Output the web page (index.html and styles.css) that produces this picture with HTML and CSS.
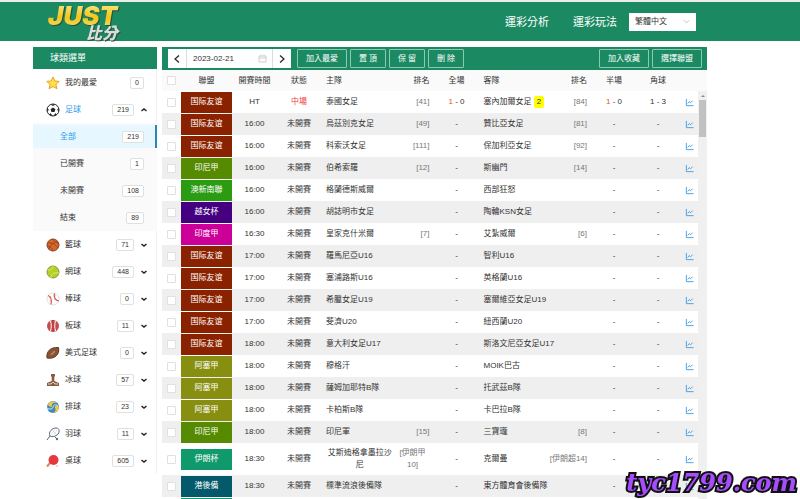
FILE: index.html
```html
<!DOCTYPE html>
<html lang="zh-Hant">
<head>
    <meta charset="UTF-8">
    <meta name="viewport" content="width=device-width, initial-scale=1.0">
    <title>JUST 比分</title>
    <link rel="stylesheet" href="styles.css">
</head>
<body>

    <!-- Shared icons -->
    <svg class="sprite" aria-hidden="true">
        <symbol id="chart" viewBox="0 0 10 10"><path d="M1.5 1v7.5H9.5M3 6l1.700-2 1.500 1.300L8.500 3" fill="none" stroke="#3a9be8"/></symbol>
        <symbol id="down" viewBox="0 0 8 8"><path d="M1.500 3L4 5l2.500-2" fill="none" stroke="#222" stroke-width="1.500"/></symbol>
        <symbol id="up" viewBox="0 0 8 8"><path d="M1.500 5L4 3l2.500 2" fill="none" stroke="#222" stroke-width="1.500"/></symbol>
    </svg>

    <header class="topbar">
        <a class="logo" href="#"><span class="logo-main">JUST</span><span class="logo-sub">比分</span></a>
        <nav class="nav">
            <a href="#">運彩分析</a>
            <a href="#">運彩玩法</a>
        </nav>
        <select class="lang" aria-label="語言">
            <option>繁體中文</option>
            <option>简体中文</option>
        </select>
    </header>

    <div class="page">
        <!-- Sport menu -->
        <aside class="sidebar">
            <h2 class="side-title">球類選單</h2>
            <button class="sport">
                <svg class="ball" viewBox="0 0 14 14"><path d="M7 1l1.800 4 4.400.4-3.300 3 1 4.300L7 10.500l-3.900 2.200 1-4.300-3.300-3L5.200 5z" fill="#ffe14d" stroke="#e8a21c"/></svg>
                <span class="name">我的最愛</span><span class="count">0</span>
            </button>
            <button class="sport active">
                <svg class="ball" viewBox="0 0 14 14"><circle cx="7" cy="7" r="6" fill="#fff" stroke="#222"/><path d="M7 4.500l2.400 1.800-.9 2.800h-3l-.9-2.800zM4.500 1.500h5L7 3zM1 5l1.800 1.500L1.500 9zM13 5l-1.800 1.500L12.500 9zM3.500 12l1-2 2 2.800zM10.500 12l-1-2-2 2.800z" fill="#222"/></svg>
                <span class="name">足球</span><span class="count">219</span><svg class="arrow"><use href="#up"/></svg>
            </button>
            <div class="submenu">
                <a class="sub selected" href="#"><span class="name">全部</span><span class="count">219</span></a>
                <a class="sub" href="#"><span class="name">已開賽</span><span class="count">1</span></a>
                <a class="sub" href="#"><span class="name">未開賽</span><span class="count">108</span></a>
                <a class="sub" href="#"><span class="name">結束</span><span class="count">89</span></a>
            </div>
            <button class="sport">
                <svg class="ball" viewBox="0 0 14 14"><circle cx="7" cy="7" r="6" fill="#d8662a" stroke="#8b4526"/><path d="M1.500 5C5 4 9 6 12 10M3 11.500C4 7 7 4 12 4M6 1c2 2 5 3 7 5M1 8c3 0 5 2 6 5" fill="none" stroke="#70391f" stroke-width=".6"/></svg>
                <span class="name">籃球</span><span class="count">71</span><svg class="arrow"><use href="#down"/></svg>
            </button>
            <button class="sport">
                <svg class="ball" viewBox="0 0 14 14"><circle cx="7" cy="7" r="6" fill="#b5cf27" stroke="#849d35"/><path d="M1.500 5c3 .5 5-1 6-4M5 13c0-4 3-6 8-5" fill="none" stroke="#e3ee8a" stroke-width=".8"/></svg>
                <span class="name">網球</span><span class="count">448</span><svg class="arrow"><use href="#down"/></svg>
            </button>
            <button class="sport">
                <svg class="ball" viewBox="0 0 14 14"><circle cx="7" cy="7" r="6" fill="#fff" stroke="#e0d5d5" stroke-width=".8"/><path d="M2 3.500c3 1 4 4 3 9M8.500 1.500c-1 4 1 7 4.500 7.500" fill="none" stroke="#d0554f" stroke-width="1.200"/><path d="M3 6l2-2M3.500 9l3-1M7 4l3-1M8 8l2-2" stroke="#dc8f8a" stroke-width=".6"/></svg>
                <span class="name">棒球</span><span class="count">0</span><svg class="arrow"><use href="#down"/></svg>
            </button>
            <button class="sport">
                <svg class="ball" viewBox="0 0 14 14"><circle cx="7" cy="7" r="6" fill="#c84a4c"/><path d="M4.500 2c1 3 1 7 0 10M9.500 2c-1 3-1 7 0 10" fill="none" stroke="#fff"/><path d="M7 1v12" stroke="#8f2834" stroke-dasharray="1 1"/></svg>
                <span class="name">板球</span><span class="count">11</span><svg class="arrow"><use href="#down"/></svg>
            </button>
            <button class="sport">
                <svg class="ball" viewBox="0 0 14 14"><path d="M1 12C0 6 4 1 12.500 1.500 14 8 9 13.500 1 12z" fill="#8a5233" stroke="#5e3726"/><path d="M4.500 9l4.500-4M5.500 7l1.500 1.500M7 5.500L8.500 7" stroke="#d9b595" stroke-width=".7"/></svg>
                <span class="name">美式足球</span><span class="count">0</span><svg class="arrow"><use href="#down"/></svg>
            </button>
            <button class="sport">
                <svg class="ball" viewBox="0 0 14 14"><path d="M5 1h4v2L8.300 4v4L13 10v3H1v-3l4.700-2V4L5 3z" fill="#8b5940"/><path d="M2 11h3l2-2 2 2h3" fill="none" stroke="#ead7c8"/></svg>
                <span class="name">冰球</span><span class="count">57</span><svg class="arrow"><use href="#down"/></svg>
            </button>
            <button class="sport">
                <svg class="ball" viewBox="0 0 14 14"><circle cx="7" cy="7" r="6" fill="#3f88b8"/><path d="M2 4c3-4 7-3 9-1-4-1-6 1-5 4-2 0-4-1-4-3zM12.500 6c1 4-2 7-6 7 3-1 4-3 2-6 1-1 3-2 4-1z" fill="#efc94c"/><path d="M1 8c3 2 6 1 6-1s3-3 5-1" fill="none" stroke="#d8edf5"/></svg>
                <span class="name">排球</span><span class="count">23</span><svg class="arrow"><use href="#down"/></svg>
            </button>
            <button class="sport">
                <svg class="ball" viewBox="0 0 14 14"><path d="M4 9C2 5 6 1 10 1s4 5 1 7-5 2-7 1zm0 0l-3 4M9 10l2 2" fill="#fff" stroke="#5d6978"/><path d="M6 3l5 5M9 2L5 8M11 3L7 9" stroke="#c7ccd2" stroke-width=".5"/><circle cx="11" cy="12" r="1.200" fill="#5d6978"/></svg>
                <span class="name">羽球</span><span class="count">11</span><svg class="arrow"><use href="#down"/></svg>
            </button>
            <button class="sport">
                <svg class="ball" viewBox="0 0 14 14"><path d="M4 9l-3 3.500" stroke="#d08b58" stroke-width="2"/><circle cx="7.500" cy="6" r="5" fill="#e5383f"/><circle cx="11" cy="12" r="1" fill="#f2c6c0"/></svg>
                <span class="name">桌球</span><span class="count">605</span><svg class="arrow"><use href="#down"/></svg>
            </button>
        </aside>

        <main class="main">
            <div class="toolbar">
                <div class="date-picker">
                    <button class="step" aria-label="前一天"><svg viewBox="0 0 8 8"><path d="M6 0.500L2 4l4 3.500" fill="none" stroke="#222" stroke-width="1.200"/></svg></button>
                    <input class="date" type="text" value="2023-02-21" aria-label="日期">
                    <svg class="calendar" viewBox="0 0 9 9"><path d="M1 2h7v6H1zM1 4h7M3 .5v2M6 .5v2" fill="none" stroke="#c4c4c4" stroke-width=".8"/></svg>
                    <button class="step next" aria-label="後一天"><svg viewBox="0 0 8 8"><path d="M2 0.500L6 4 2 7.500" fill="none" stroke="#222" stroke-width="1.200"/></svg></button>
                </div>
                <button class="btn wide">加入最愛</button>
                <button class="btn">置 頂</button>
                <button class="btn">保 留</button>
                <button class="btn">刪 除</button>
                <span class="spacer"></span>
                <button class="btn wide">加入收藏</button>
                <button class="btn wide">選擇聯盟</button>
            </div>

            <div class="board">
                <table class="matches">
                    <colgroup>
                        <col class="c-check"><col class="c-league"><col class="c-time"><col class="c-score"><col>
                        <col class="c-score"><col><col class="c-score"><col class="c-score"><col class="c-icon">
                    </colgroup>
                    <thead>
                        <tr>
                            <th><input type="checkbox" aria-label="全選"></th>
                            <th>聯盟</th><th>開賽時間</th><th>狀態</th>
                            <th><div class="team"><span>主隊</span><span>排名</span></div></th>
                            <th>全場</th>
                            <th><div class="team"><span>客隊</span><span>排名</span></div></th>
                            <th>半場</th><th>角球</th><th></th>
                        </tr>
                    </thead>
                    <tbody>
                        <tr>
                            <td><input type="checkbox" aria-label="泰國女足"></td>
                            <td><span class="league friendly">国际友谊</span></td><td>HT</td><td class="live">中場</td>
                            <td><div class="team"><span>泰國女足</span><span class="rank">[41]</span></div></td>
                            <td><span class="goal">1</span> - 0</td>
                            <td><div class="team"><span>塞內加爾女足 <b class="card">2</b></span><span class="rank">[84]</span></div></td>
                            <td><span class="goal">1</span> - 0</td><td>1 - 3</td><td><svg class="chart"><use href="#chart"/></svg></td>
                        </tr>
                        <tr>
                            <td><input type="checkbox" aria-label="烏茲別克女足"></td>
                            <td><span class="league friendly">国际友谊</span></td><td>16:00</td><td>未開賽</td>
                            <td><div class="team"><span>烏茲別克女足</span><span class="rank">[49]</span></div></td>
                            <td>-</td>
                            <td><div class="team"><span>贊比亞女足</span><span class="rank">[81]</span></div></td>
                            <td>-</td><td>-</td><td><svg class="chart"><use href="#chart"/></svg></td>
                        </tr>
                        <tr>
                            <td><input type="checkbox" aria-label="科索沃女足"></td>
                            <td><span class="league friendly">国际友谊</span></td><td>16:00</td><td>未開賽</td>
                            <td><div class="team"><span>科索沃女足</span><span class="rank">[111]</span></div></td>
                            <td>-</td>
                            <td><div class="team"><span>保加利亞女足</span><span class="rank">[92]</span></div></td>
                            <td>-</td><td>-</td><td><svg class="chart"><use href="#chart"/></svg></td>
                        </tr>
                        <tr>
                            <td><input type="checkbox" aria-label="伯希索羅"></td>
                            <td><span class="league indonesia">印尼甲</span></td><td>16:00</td><td>未開賽</td>
                            <td><div class="team"><span>伯希索羅</span><span class="rank">[12]</span></div></td>
                            <td>-</td>
                            <td><div class="team"><span>斯幽門</span><span class="rank">[14]</span></div></td>
                            <td>-</td><td>-</td><td><svg class="chart"><use href="#chart"/></svg></td>
                        </tr>
                        <tr>
                            <td><input type="checkbox" aria-label="格蘭德斯威爾"></td>
                            <td><span class="league australia">澳新南聯</span></td><td>16:00</td><td>未開賽</td>
                            <td><div class="team"><span>格蘭德斯威爾</span></div></td>
                            <td>-</td>
                            <td><div class="team"><span>西部狂怒</span></div></td>
                            <td>-</td><td>-</td><td><svg class="chart"><use href="#chart"/></svg></td>
                        </tr>
                        <tr>
                            <td><input type="checkbox" aria-label="胡誌明市女足"></td>
                            <td><span class="league vietnam">越女杯</span></td><td>16:00</td><td>未開賽</td>
                            <td><div class="team"><span>胡誌明市女足</span></div></td>
                            <td>-</td>
                            <td><div class="team"><span>陶輪KSN女足</span></div></td>
                            <td>-</td><td>-</td><td><svg class="chart"><use href="#chart"/></svg></td>
                        </tr>
                        <tr>
                            <td><input type="checkbox" aria-label="皇家克什米爾"></td>
                            <td><span class="league india">印度甲</span></td><td>16:30</td><td>未開賽</td>
                            <td><div class="team"><span>皇家克什米爾</span><span class="rank">[7]</span></div></td>
                            <td>-</td>
                            <td><div class="team"><span>艾紮威爾</span><span class="rank">[6]</span></div></td>
                            <td>-</td><td>-</td><td><svg class="chart"><use href="#chart"/></svg></td>
                        </tr>
                        <tr>
                            <td><input type="checkbox" aria-label="羅馬尼亞U16"></td>
                            <td><span class="league friendly">国际友谊</span></td><td>17:00</td><td>未開賽</td>
                            <td><div class="team"><span>羅馬尼亞U16</span></div></td>
                            <td>-</td>
                            <td><div class="team"><span>智利U16</span></div></td>
                            <td>-</td><td>-</td><td><svg class="chart"><use href="#chart"/></svg></td>
                        </tr>
                        <tr>
                            <td><input type="checkbox" aria-label="塞浦路斯U16"></td>
                            <td><span class="league friendly">国际友谊</span></td><td>17:00</td><td>未開賽</td>
                            <td><div class="team"><span>塞浦路斯U16</span></div></td>
                            <td>-</td>
                            <td><div class="team"><span>英格蘭U16</span></div></td>
                            <td>-</td><td>-</td><td><svg class="chart"><use href="#chart"/></svg></td>
                        </tr>
                        <tr>
                            <td><input type="checkbox" aria-label="希臘女足U19"></td>
                            <td><span class="league friendly">国际友谊</span></td><td>17:00</td><td>未開賽</td>
                            <td><div class="team"><span>希臘女足U19</span></div></td>
                            <td>-</td>
                            <td><div class="team"><span>塞爾維亞女足U19</span></div></td>
                            <td>-</td><td>-</td><td><svg class="chart"><use href="#chart"/></svg></td>
                        </tr>
                        <tr>
                            <td><input type="checkbox" aria-label="斐濟U20"></td>
                            <td><span class="league friendly">国际友谊</span></td><td>17:00</td><td>未開賽</td>
                            <td><div class="team"><span>斐濟U20</span></div></td>
                            <td>-</td>
                            <td><div class="team"><span>紐西蘭U20</span></div></td>
                            <td>-</td><td>-</td><td><svg class="chart"><use href="#chart"/></svg></td>
                        </tr>
                        <tr>
                            <td><input type="checkbox" aria-label="意大利女足U17"></td>
                            <td><span class="league friendly">国际友谊</span></td><td>18:00</td><td>未開賽</td>
                            <td><div class="team"><span>意大利女足U17</span></div></td>
                            <td>-</td>
                            <td><div class="team"><span>斯洛文尼亞女足U17</span></div></td>
                            <td>-</td><td>-</td><td><svg class="chart"><use href="#chart"/></svg></td>
                        </tr>
                        <tr>
                            <td><input type="checkbox" aria-label="穆格汗"></td>
                            <td><span class="league azerbaijan">阿塞甲</span></td><td>18:00</td><td>未開賽</td>
                            <td><div class="team"><span>穆格汗</span></div></td>
                            <td>-</td>
                            <td><div class="team"><span>MOIK巴古</span></div></td>
                            <td>-</td><td>-</td><td><svg class="chart"><use href="#chart"/></svg></td>
                        </tr>
                        <tr>
                            <td><input type="checkbox" aria-label="薩姆加耶特B隊"></td>
                            <td><span class="league azerbaijan">阿塞甲</span></td><td>18:00</td><td>未開賽</td>
                            <td><div class="team"><span>薩姆加耶特B隊</span></div></td>
                            <td>-</td>
                            <td><div class="team"><span>托武茲B隊</span></div></td>
                            <td>-</td><td>-</td><td><svg class="chart"><use href="#chart"/></svg></td>
                        </tr>
                        <tr>
                            <td><input type="checkbox" aria-label="卡柏斯B隊"></td>
                            <td><span class="league azerbaijan">阿塞甲</span></td><td>18:00</td><td>未開賽</td>
                            <td><div class="team"><span>卡柏斯B隊</span></div></td>
                            <td>-</td>
                            <td><div class="team"><span>卡巴拉B隊</span></div></td>
                            <td>-</td><td>-</td><td><svg class="chart"><use href="#chart"/></svg></td>
                        </tr>
                        <tr>
                            <td><input type="checkbox" aria-label="印尼軍"></td>
                            <td><span class="league indonesia">印尼甲</span></td><td>18:00</td><td>未開賽</td>
                            <td><div class="team"><span>印尼軍</span><span class="rank">[15]</span></div></td>
                            <td>-</td>
                            <td><div class="team"><span>三寶瓏</span><span class="rank">[8]</span></div></td>
                            <td>-</td><td>-</td><td><svg class="chart"><use href="#chart"/></svg></td>
                        </tr>
                        <tr class="tall">
                            <td><input type="checkbox" aria-label="艾斯迪格拿墨拉沙尼"></td>
                            <td><span class="league iran">伊朗杯</span></td><td>18:30</td><td>未開賽</td>
                            <td><div class="team wrap"><span>艾斯迪格拿墨拉沙尼</span><span class="rank">[伊朗甲 10]</span></div></td>
                            <td>-</td>
                            <td><div class="team"><span>克爾曼</span><span class="rank">[伊朗超14]</span></div></td>
                            <td>-</td><td>-</td><td><svg class="chart"><use href="#chart"/></svg></td>
                        </tr>
                        <tr>
                            <td><input type="checkbox" aria-label="標準流浪後備隊"></td>
                            <td><span class="league hongkong">港後備</span></td><td>18:30</td><td>未開賽</td>
                            <td><div class="team"><span>標準流浪後備隊</span></div></td>
                            <td>-</td>
                            <td><div class="team"><span>東方體育會後備隊</span></div></td>
                            <td>-</td><td>-</td><td><svg class="chart"><use href="#chart"/></svg></td>
                        </tr>
                        <tr>
                            <td></td><td><span class="league iran"></span></td><td></td><td></td><td></td>
                            <td></td><td></td><td></td><td></td><td></td>
                        </tr>
                    </tbody>
                </table>
                <div class="scrollbar"><span class="scroll-up"></span><span class="thumb"></span></div>
            </div>
        </main>
    </div>

    <div class="watermark">tyc1799.com</div>

</body>
</html>
```
FILE: styles.css
```css
* {
    box-sizing: border-box;
}

body {
    margin: 0;
    height: 100vh;
    overflow: hidden;
    background-color: #fff;
    color: #333;
    font-family: "Liberation Sans", "Noto Sans CJK TC", sans-serif;
    font-size: 8px;
    line-height: 12px;
}

button, input, select {
    font: inherit;
    color: inherit;
    margin: 0;
    padding: 0;
    border: none;
    border-radius: 0;
    background: none;
}

a {
    color: inherit;
    text-decoration: none;
}

.sprite {
    display: none;
}

/* Top bar */
.topbar {
    display: flex;
    align-items: center;
    height: 41px;
    padding: 0 104px 0 48px;
    border-top: 2px solid #ececec;
    background-color: #1b8a63;
    color: #fff;
}

.logo {
    display: flex;
    flex-direction: column;
    width: 76px;
    padding-top: 3px;
    font-style: italic;
    font-weight: 900;
    filter: drop-shadow(1px 1px 0 #24503c);
}

.logo-main {
    font-family: Inter, sans-serif;
    font-size: 26px;
    line-height: 22px;
    color: transparent;
    background: linear-gradient(#f7e27a, #f5c518 55%, #f0d860);
    -webkit-background-clip: text;
    background-clip: text;
}

.logo-sub {
    align-self: flex-end;
    padding-right: 6px;
    font-size: 16px;
    line-height: 14px;
    color: #dcdcdc;
}

.nav {
    display: flex;
    gap: 24px;
    margin: 0 12px 0 auto;
    font-size: 11px;
    line-height: 16px;
}

.lang {
    appearance: none;
    width: 67px;
    height: 18px;
    padding: 1px 6px 0;
    color: #333;
    background: #fff url("data:image/svg+xml,%3Csvg xmlns='http://www.w3.org/2000/svg' viewBox='0 0 8 8'%3E%3Cpath d='M1 2.500l3 3 3-3' fill='none' stroke='%23bbb'/%3E%3C/svg%3E") no-repeat right 6px center / 7px 7px;
}

.page {
    display: flex;
    align-items: flex-start;
    gap: 5px;
    padding: 6px 93px 0 33px;
}

/* Sidebar */
.sidebar {
    flex: 0 0 124px;
    border-right: 1px solid #f0f0f0;
}

.side-title {
    margin: 0 -1px 0 0;
    padding: 0 17px;
    font-size: 9px;
    font-weight: normal;
    line-height: 22px;
    color: #fff;
    background-color: #1b8a63;
}

.sport {
    display: flex;
    align-items: center;
    width: 100%;
    height: 27px;
    padding: 0 8px 0 13px;
    text-align: left;
}

.sport.active .name,
.sub.selected .name {
    color: #2f9be8;
}

.ball {
    width: 14px;
    height: 14px;
    margin-right: 5px;
}

.name {
    flex: 1;
}

.count {
    padding: 0 4px;
    border: 1px solid #e0e0e0;
    border-radius: 2px;
    font-size: 7px;
    line-height: 10px;
    background-color: #fff;
}

.arrow {
    width: 8px;
    height: 8px;
    margin-left: 6px;
}

.sport .count:last-child {
    margin-right: 4px;
}

.submenu {
    padding: 2px 0;
    display: flex;
    flex-direction: column;
    gap: 4px;
    margin-right: -1px;
    background-color: #fafafa;
}

.sub {
    display: flex;
    align-items: center;
    height: 23px;
    padding: 0 13px 0 27px;
}

.sub.selected {
    padding-right: 11px;
    background-color: #e6f7ff;
    border-right: 2px solid #2f86b5;
}

/* Toolbar */
.main {
    flex: 1;
    min-width: 0;
}

.toolbar {
    display: flex;
    align-items: center;
    gap: 3px;
    height: 23px;
    padding: 0 5px 0 6px;
    background-color: #1b8a63;
}

.date-picker {
    display: flex;
    align-items: center;
    width: 123px;
    height: 19px;
    margin-right: 3px;
    background-color: #fff;
}

.step {
    display: flex;
    align-items: center;
    justify-content: center;
    flex: 0 0 19px;
    height: 19px;
    border-right: 1px solid #ddd;
}

.step.next {
    border-right: none;
    border-left: 1px solid #ddd;
}

.step svg {
    width: 8px;
    height: 8px;
}

.date {
    flex: 1;
    min-width: 0;
    padding-left: 6px;
}

.calendar {
    width: 9px;
    height: 9px;
    margin-right: 5px;
}

.btn {
    width: 36px;
    height: 19px;
    border: 1px solid #8cc9b2;
    border-radius: 1px;
    color: #fff;
    white-space: nowrap;
}

.btn.wide {
    width: 50px;
}

.spacer {
    flex: 1;
}

/* Match table */
.board {
    display: flex;
}

.matches {
    flex: 1;
    width: 100%;
    min-width: 0;
    table-layout: fixed;
    border-collapse: collapse;
}

.c-check { width: 19px; }
.c-league { width: 51px; }
.c-time { width: 45px; }
.c-score { width: 44px; }
.c-icon { width: 18px; }

.matches th,
.matches td {
    height: 22px;
    padding: 0;
    text-align: center;
    font-weight: normal;
    white-space: nowrap;
}

.matches th {
    height: 21px;
    background-color: #fafafa;
}

.matches tbody tr:nth-child(even) {
    background-color: #efefef;
}

.matches .tall td {
    height: 32px;
}

.matches input {
    display: block;
    appearance: none;
    width: 9px;
    height: 9px;
    margin: 0 auto;
    border: 1px solid #e0e0e0;
    border-radius: 1px;
    background-color: #fff;
}

.league {
    display: block;
    height: 21px;
    line-height: 20px;
    color: #fff;
}

.friendly { background-color: #8a2200; }
.indonesia { background-color: #568a00; }
.australia { background-color: #2b9b12; }
.vietnam { background-color: #440080; }
.india { background-color: #cc0099; }
.azerbaijan { background-color: #888f10; }
.iran { background-color: #109a6c; }
.hongkong { background-color: #045a6a; }

.team {
    display: flex;
    justify-content: space-between;
    padding: 0 5px;
}

.team.wrap {
    padding: 0 4px;
    text-align: center;
    white-space: normal;
}

.wrap span:first-child {
    flex: 1;
}

.wrap .rank {
    flex: 0 0 36px;
}

.rank {
    color: #777;
}

.live {
    color: #f04040;
}

.goal {
    color: #e0562c;
}

.card {
    display: inline-block;
    padding: 0 3px;
    border-radius: 2px;
    font-weight: normal;
    color: #333;
    background-color: #ff0;
}

.chart {
    display: block;
    width: 9px;
    height: 9px;
    margin: 0 auto;
}

/* Scroll track beside the rows */
.scrollbar {
    flex: 0 0 9px;
    display: flex;
    flex-direction: column;
    align-items: center;
    gap: 3px;
    border-top: 21px solid #fafafa;
    background-color: #f0f0f0;
}

.scroll-up {
    margin-top: 4px;
    border: 2px solid transparent;
    border-top: none;
    border-bottom-color: #888;
}

.thumb {
    width: 7px;
    height: 37px;
    background-color: #c1c1c1;
}

/* Site mark over the bottom corner */
.watermark {
    position: fixed;
    right: 3px;
    bottom: 2px;
    font-family: "DejaVu Serif", serif;
    font-size: 24px;
    font-style: italic;
    font-weight: bold;
    line-height: 28px;
    color: #a64dff;
    -webkit-text-stroke: 4px #111;
    paint-order: stroke fill;
}
```
